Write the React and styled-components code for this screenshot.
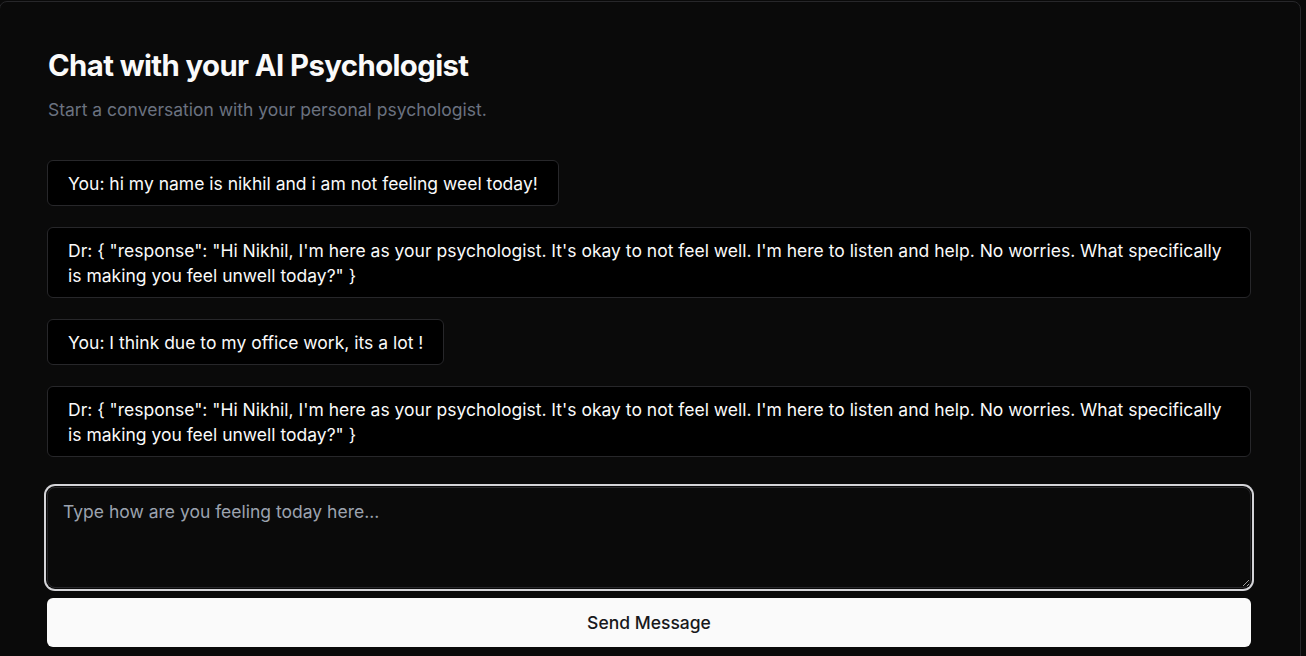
import React from "react";
import styled, { createGlobalStyle } from "styled-components";

const Global = createGlobalStyle`
  html, body {
    margin: 0;
    padding: 0;
    background: #0a0a0a;
    color-scheme: dark;
  }
  body {
    font-family: Inter, "Noto Sans", "Liberation Sans", sans-serif;
    overflow: hidden;
  }
  * { box-sizing: border-box; }
`;

const Page = styled.div`
  padding-top: 1px;
  min-height: 656px;
`;

const Card = styled.section`
  width: 1302px;
  margin-left: -1px;
  background: #0a0a0a;
  border: 1px solid #27272a;
  border-radius: 8px;
  padding: 49px 49px 40px 47px;
  display: flex;
  flex-direction: column;
`;

const Title = styled.h1`
  margin: 0;
  font-size: 29.3px;
  line-height: 29px;
  font-weight: 700;
  letter-spacing: -0.02em;
  color: #fafafa;
  padding-left: 1px;
`;

const Subtitle = styled.p`
  margin: 18px 0 0;
  font-size: 17.5px;
  line-height: 24px;
  color: #6b7280;
  padding-left: 1px;
`;

const Messages = styled.div`
  margin-top: 38px;
  display: flex;
  flex-direction: column;
  align-items: flex-start;
  gap: 21px;
`;

const Bubble = styled.div`
  align-self: ${(p) => (p.$full ? "stretch" : "flex-start")};
  background: #000;
  border: 1px solid #27272a;
  border-radius: 6px;
  padding: 10px 20px 9px;
  font-size: 17.5px;
  line-height: 25px;
  color: #fafafa;
`;

const Form = styled.form`
  margin-top: 30px;
  display: flex;
  flex-direction: column;
  gap: 10px;
`;

const TextArea = styled.textarea`
  width: 100%;
  height: 101px;
  background: #0a0a0a;
  border: 1px solid #27272a;
  border-radius: 8px;
  padding: 12px 15px;
  font-family: inherit;
  font-size: 17.5px;
  line-height: 24px;
  color: #fafafa;
  outline: none;
  box-shadow: 0 0 0 1px #0a0a0a, 0 0 0 3px #d4d4d8;
  resize: vertical;
  &::placeholder {
    color: #9ca3af;
  }
`;

const SendButton = styled.button`
  height: 49px;
  width: 100%;
  border: none;
  border-radius: 6px;
  background: #fafafa;
  color: #18181b;
  font-family: inherit;
  font-size: 17.5px;
  font-weight: 500;
  cursor: pointer;
`;

const messages = [
  { who: "You", text: "hi my name is nikhil and i am not feeling weel today!" },
  {
    who: "Dr",
    text: '{ "response": "Hi Nikhil, I\'m here as your psychologist. It\'s okay to not feel well. I\'m here to listen and help. No worries. What specifically is making you feel unwell today?" }',
  },
  { who: "You", text: "I think due to my office work, its a lot !" },
  {
    who: "Dr",
    text: '{ "response": "Hi Nikhil, I\'m here as your psychologist. It\'s okay to not feel well. I\'m here to listen and help. No worries. What specifically is making you feel unwell today?" }',
  },
];

export default function App() {
  return (
    <>
      <Global />
      <Page>
        <Card>
          <Title>Chat with your AI Psychologist</Title>
          <Subtitle>Start a conversation with your personal psychologist.</Subtitle>
          <Messages>
            {messages.map((m, i) => (
              <Bubble key={i} $full={m.who === "Dr"}>
                {m.who}: {m.text}
              </Bubble>
            ))}
          </Messages>
          <Form onSubmit={(e) => e.preventDefault()}>
            <TextArea placeholder="Type how are you feeling today here..." />
            <SendButton type="submit">Send Message</SendButton>
          </Form>
        </Card>
      </Page>
    </>
  );
}
